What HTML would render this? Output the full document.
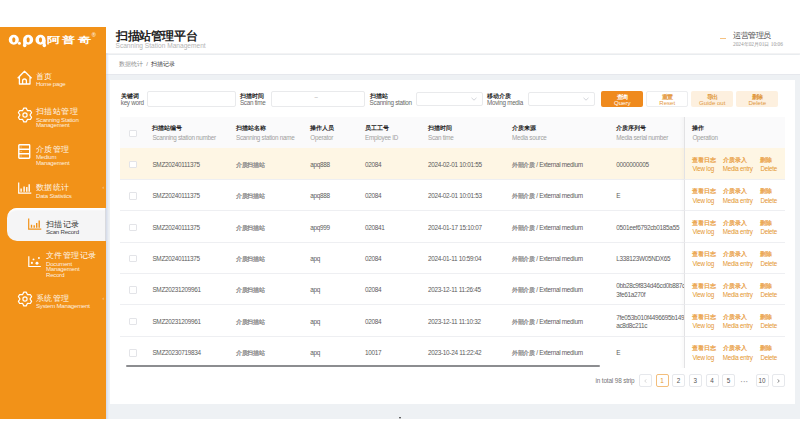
<!DOCTYPE html>
<html><head><meta charset="utf-8">
<style>
*{margin:0;padding:0;box-sizing:border-box}
html,body{width:800px;height:447px;overflow:hidden;background:#fff;font-family:"Liberation Sans",sans-serif;position:relative}
.a{position:absolute;white-space:nowrap}
#side{position:absolute;left:0;top:27px;width:106px;height:392px;background:#F29218;color:#fff}
#main{position:absolute;left:106px;top:27px;width:694px;height:392px;background:#EEF1F4}
#hdr{position:absolute;left:0;top:0;width:694px;height:27px;background:#fff;border-bottom:1px solid #F3F3F4;box-shadow:0 .8px 1px rgba(0,0,0,.02)}
#bc{position:absolute;left:0;top:28px;width:694px;height:20px;background:#fff;border-bottom:1.3px solid #E6E8ED}
#card{position:absolute;left:4px;top:53px;width:685px;height:324px;background:#fff}
.zh{letter-spacing:.4px;font-size:8.3px;line-height:9px;color:rgba(255,255,255,.95)}
.en{font-size:6.1px;letter-spacing:-.22px;line-height:5.3px;margin-top:-.6px;color:rgba(255,255,255,.88)}
.ico{position:absolute}
.pill{position:absolute;left:7px;top:181.2px;width:99px;height:33.3px;background:#F5F5F6;border-radius:10px 0 0 10px;border-right:1px solid #D9DADE;box-shadow:inset 0 4px 2px -2px #fff}
.btn{position:absolute;width:42px;height:16.3px;border-radius:2px;text-align:center}
.btn .z{font-size:6.2px;line-height:6px;display:block;margin-top:3.3px;font-weight:bold;letter-spacing:-.5px;text-indent:-.5px}
.btn .e{font-size:6.1px;line-height:6.6px;display:block;margin-top:.5px}
.lbl .z{font-size:6px;line-height:6.5px;font-weight:bold;color:#222;display:block;margin-top:.7px}
.lbl .e{font-size:6.3px;letter-spacing:-.27px;line-height:6.5px;color:#6A6A6A;display:block;margin-top:.1px}
.inp{position:absolute;border:1px solid #E9EAEC;border-radius:2px;background:#fff}
.th .z{font-size:6px;line-height:7px;font-weight:bold;color:#222;display:block;margin-top:.8px}
.th .e{font-size:6.3px;letter-spacing:-.27px;line-height:7px;color:#A0A0A0;display:block;margin-top:1.5px}
.cell{position:absolute;font-size:6.4px;letter-spacing:-.3px;color:#5C5C5C;white-space:nowrap}
.cb{position:absolute;width:7.5px;height:7.5px;border:1px solid #E3E4E8;border-radius:1px;background:#fff}
.op{position:absolute;color:#E4962F}
.op .z{font-size:5.8px;line-height:8px;display:block;color:#E08A1E;-webkit-text-stroke:.25px #EDA850}
.op .e{font-size:6.3px;letter-spacing:-.27px;line-height:7px;display:block;margin-top:1.5px}
.pg{position:absolute;width:13px;height:13px;border:1px solid #E6E8EC;border-radius:2px;font-size:6.3px;line-height:11px;text-align:center;color:#555;background:#fff}
</style></head><body>
<div id="side">
  <svg class="ico" style="left:0;top:0" width="50" height="24" viewBox="0 27 50 24"><path fill="#fff" fill-rule="evenodd" d="M8.75 39.8a5.05 4.95 0 1 0 10.10 0a5.05 4.95 0 1 0 -10.10 0zM12.20 39.8a1.6 2.6 0 1 0 3.20 0a1.6 2.6 0 1 0 -3.20 0zM23.10 39.8a5.05 4.95 0 1 0 10.10 0a5.05 4.95 0 1 0 -10.10 0zM26.55 39.8a1.6 2.6 0 1 0 3.20 0a1.6 2.6 0 1 0 -3.20 0zM35.45 39.8a5.05 4.95 0 1 0 10.10 0a5.05 4.95 0 1 0 -10.10 0zM38.90 39.8a1.6 2.6 0 1 0 3.20 0a1.6 2.6 0 1 0 -3.20 0z"/><circle cx="19.4" cy="43.3" r="1.5" fill="#fff"/><circle cx="24.7" cy="45.6" r="1.75" fill="#fff"/><path d="M23.2 40H26.2V45.6H23.2z" fill="#fff"/><circle cx="44.3" cy="45.6" r="1.75" fill="#fff"/><path d="M42.8 40H45.6V45.6H42.8z" fill="#fff"/></svg>
  <div class="a" style="left:47.2px;top:7.5px;font-size:9px;line-height:10px;font-weight:bold;letter-spacing:1.55px;transform:scaleX(1.46);transform-origin:0 0">阿普奇</div>
  <div class="a" style="left:91.8px;top:6px;font-size:5.5px;line-height:5px;color:#fff">®</div>

  <svg class="ico" style="left:17px;top:43px" width="16" height="16" viewBox="0 0 16 16" fill="none" stroke="#fff" stroke-width="1.3"><path stroke-linejoin="round" d="M0.7 8.3L7.5 1.3 14.6 8.3M2.4 6.7V14H13V6.7M5.6 14V10.9a1.9 1.9 0 0 1 3.8 0V14"/></svg>
  <div class="a zh" style="left:36px;top:44.5px">首页</div>
  <div class="a en" style="left:36px;top:55px">Home page</div>

  <svg class="ico" style="left:16.5px;top:79.5px" width="16" height="16" viewBox="0 0 16 16" fill="none" stroke="#fff" stroke-width="1.2"><path stroke-linejoin="round" d="M6.78 1.11L9.22 1.11L10.50 3.67L13.36 3.50L14.58 5.61L13.00 8.00L14.58 10.39L13.36 12.50L10.50 12.33L9.22 14.89L6.78 14.89L5.50 12.33L2.64 12.50L1.42 10.39L3.00 8.00L1.42 5.61L2.64 3.50L5.50 3.67z"/><circle cx="8" cy="8" r="2.1"/></svg>
  <div class="a zh" style="left:36px;top:80px">扫描站管理</div>
  <div class="a en" style="left:36px;top:90.5px">Scanning Station<br>Management</div>

  <svg class="ico" style="left:18.3px;top:116.8px" width="13" height="15" viewBox="0 0 13 15" fill="none" stroke="#fff" stroke-width="1.4"><rect x="0.8" y="0.8" width="10.9" height="13.4" rx=".6"/><path d="M0.8 5.3H11.7M0.8 9.7H11.7"/><path d="M2.6 3h1M2.6 7.5h1M2.6 12h1" stroke-width="1" stroke-opacity=".6"/></svg>
  <div class="a zh" style="left:36px;top:117.5px">介质管理</div>
  <div class="a en" style="left:36px;top:128px">Medium<br>Management</div>

  <svg class="ico" style="left:18px;top:155px" width="14" height="12" viewBox="0 0 14 12" fill="none" stroke="#fff" stroke-width="1.2"><path d="M0.7 0.4V11.2H13.3"/><path d="M3.1 9.8V6.6M6.1 9.8V4.5M8.8 9.8V5M11.2 9.8V2.3" stroke-width="1.4"/></svg>
  <div class="a zh" style="left:36px;top:156px">数据统计</div>
  <div class="a en" style="left:36px;top:166.5px">Data Statistics</div>
  <div class="a" style="left:102.5px;top:157px;font-size:5px;color:rgba(255,255,255,.7)">‹</div>

  <div class="pill"></div>
  <svg class="ico" style="left:28px;top:191px" width="14" height="12" viewBox="0 0 14 12" fill="none" stroke="#F29218" stroke-width="1.2"><path d="M0.7 0.4V11.2H13.3"/><path d="M3.5 9.8V6.7M6.2 9.8V7.2M8.7 9.8V4.9M11.2 9.8V2.4" stroke-width="1.4"/></svg>
  <div class="a zh" style="left:46px;top:192.5px;color:#333">扫描记录</div>
  <div class="a en" style="left:46px;top:203px;color:#444">Scan Record</div>

  <svg class="ico" style="left:28px;top:228px" width="14" height="13" viewBox="0 0 14 13" fill="none" stroke="#fff" stroke-width="1.2"><path d="M0.8 1.2V11.5H12.8"/><g fill="#fff" stroke="none"><circle cx="5.5" cy="4.4" r=".95"/><circle cx="10.9" cy="3" r=".95"/><circle cx="3.9" cy="7.9" r="1.05"/><circle cx="9" cy="8.2" r="1.45"/></g></svg>
  <div class="a zh" style="left:46px;top:223.5px">文件管理记录</div>
  <div class="a en" style="left:46px;top:234.5px">Document<br>Management<br>Record</div>

  <svg class="ico" style="left:17px;top:264px" width="16" height="16" viewBox="0 0 16 16" fill="none" stroke="#fff" stroke-width="1.2"><path stroke-linejoin="round" d="M6.78 1.11L9.22 1.11L10.50 3.67L13.36 3.50L14.58 5.61L13.00 8.00L14.58 10.39L13.36 12.50L10.50 12.33L9.22 14.89L6.78 14.89L5.50 12.33L2.64 12.50L1.42 10.39L3.00 8.00L1.42 5.61L2.64 3.50L5.50 3.67z"/><circle cx="8" cy="8" r="2.1"/></svg>
  <div class="a zh" style="left:36px;top:266.5px">系统管理</div>
  <div class="a en" style="left:36px;top:276.5px">System Management</div>
  <div class="a" style="left:102.5px;top:268px;font-size:5px;color:rgba(255,255,255,.7)">‹</div>
</div>
<div id="main">
  <div id="hdr">
    <div class="a" style="left:10px;top:2px;font-size:11.5px;line-height:13px;font-weight:bold;color:#222;top:2.8px;letter-spacing:-.4px">扫描站管理平台</div>
    <div class="a" style="left:9.5px;top:15px;font-size:6.6px;line-height:7px;color:#B5B5B5">Scanning Station Management</div>
    <div class="a" style="left:614px;top:11.2px;width:6px;height:1.2px;background:#F5C282"></div>
    <div class="a" style="left:627px;top:3.8px;letter-spacing:-.5px;font-size:8px;line-height:9px;color:#444">运营管理员</div>
    <div class="a" style="left:627px;top:14px;font-family:'Liberation Serif',serif;font-size:5.35px;line-height:7px;color:#999">2024年02月01日 10:06</div>
  </div>
  <div id="bc">
    <div class="a" style="left:13px;top:6px;font-size:6px;line-height:7px;color:#888">数据统计 &nbsp;/&nbsp; <span style="color:#333">扫描记录</span></div>
  </div>
<div id="card">
<div class="a lbl" style="left:10.75px;top:12.8px"><span class="z">关键词</span><span class="e">key word</span></div>
<div class="inp" style="left:36.5px;top:10.6px;width:89.8px;height:16.4px"></div>
<div class="a lbl" style="left:129.9px;top:12.8px"><span class="z">扫描时间</span><span class="e">Scan time</span></div>
<div class="inp" style="left:160.9px;top:10.6px;width:94.5px;height:16.4px"><div class="a" style="left:42.5px;top:2.6px;font-size:6px;color:#999">–</div></div>
<div class="a lbl" style="left:259.6px;top:12.8px"><span class="z">扫描站</span><span class="e">Scanning station</span></div>
<div class="inp" style="left:306.4px;top:12px;width:66.2px;height:13.5px"><svg class="a" style="right:4.5px;top:3.8px" width="6" height="4" viewBox="0 0 6 4" fill="none" stroke="#C0C4CC" stroke-width=".7"><path d="M.5 .8L3 3.2 5.5 .8"/></svg></div>
<div class="a lbl" style="left:377px;top:12.8px"><span class="z">移动介质</span><span class="e">Moving media</span></div>
<div class="inp" style="left:418.1px;top:12px;width:66.5px;height:13.5px"><svg class="a" style="right:4.5px;top:3.8px" width="6" height="4" viewBox="0 0 6 4" fill="none" stroke="#C0C4CC" stroke-width=".7"><path d="M.5 .8L3 3.2 5.5 .8"/></svg></div>
<div class="btn" style="left:491.25px;top:10.6px;background:#EF8A1D;color:#fff"><span class="z">查询</span><span class="e">Query</span></div>
<div class="btn" style="left:536.25px;top:10.6px;background:#fff;border:1px solid #ECEDEF;color:#E49A45"><span class="z" style="margin-top:2.3px">重置</span><span class="e">Reset</span></div>
<div class="btn" style="left:581.25px;top:10.6px;background:#FDF0DF;color:#E0983E"><span class="z">导出</span><span class="e">Guide out</span></div>
<div class="btn" style="left:626.25px;top:10.6px;background:#FDF0DF;color:#E0983E"><span class="z">删除</span><span class="e">Delete</span></div>
<div class="a" style="left:10px;top:37.2px;width:665px;height:31.2px;background:#FAFAFB"></div>
<div class="cb" style="left:19.3px;top:49.7px"></div>
<div class="th a" style="left:42.4px;top:44.7px"><span class="z">扫描站编号</span><span class="e">Scanning station number</span></div>
<div class="th a" style="left:126px;top:44.7px"><span class="z">扫描站名称</span><span class="e">Scanning station name</span></div>
<div class="th a" style="left:200.3px;top:44.7px"><span class="z">操作人员</span><span class="e">Operator</span></div>
<div class="th a" style="left:255px;top:44.7px"><span class="z">员工工号</span><span class="e">Employee ID</span></div>
<div class="th a" style="left:318px;top:44.7px"><span class="z">扫描时间</span><span class="e">Scan time</span></div>
<div class="th a" style="left:402px;top:44.7px"><span class="z">介质来源</span><span class="e">Media source</span></div>
<div class="th a" style="left:506.2px;top:44.7px"><span class="z">介质序列号</span><span class="e">Media serial number</span></div>
<div class="a" style="left:10px;top:68.4px;width:665px;height:31.4px;background:#FEF6E4;border-bottom:1px solid #EEEFF2"></div>
<div class="cb" style="left:19.3px;top:80.7px"></div>
<div class="cell a" style="left:42.4px;top:80.7px;line-height:8px">SMZ20240111375</div>
<div class="cell a" style="left:126px;top:80.7px;line-height:8px"><span style="color:#555;-webkit-text-stroke:.25px #999">介质扫描站</span></div>
<div class="cell a" style="left:200.3px;top:80.7px;line-height:8px">apq888</div>
<div class="cell a" style="left:255px;top:80.7px;line-height:8px">02084</div>
<div class="cell a" style="left:318px;top:80.7px;line-height:8px">2024-02-01 10:01:55</div>
<div class="cell a" style="left:402px;top:80.7px;line-height:8px"><span style="color:#555;-webkit-text-stroke:.25px #999">外部介质</span> / External medium</div>
<div class="cell a" style="left:506.2px;top:80.7px;line-height:8px">0000000005</div>
<div class="a" style="left:10px;top:99.80000000000001px;width:665px;height:31.4px;background:#fff;border-bottom:1px solid #EEEFF2"></div>
<div class="cb" style="left:19.3px;top:112.10000000000001px"></div>
<div class="cell a" style="left:42.4px;top:112.10000000000001px;line-height:8px">SMZ20240111375</div>
<div class="cell a" style="left:126px;top:112.10000000000001px;line-height:8px"><span style="color:#555;-webkit-text-stroke:.25px #999">介质扫描站</span></div>
<div class="cell a" style="left:200.3px;top:112.10000000000001px;line-height:8px">apq888</div>
<div class="cell a" style="left:255px;top:112.10000000000001px;line-height:8px">02084</div>
<div class="cell a" style="left:318px;top:112.10000000000001px;line-height:8px">2024-02-01 10:01:53</div>
<div class="cell a" style="left:402px;top:112.10000000000001px;line-height:8px"><span style="color:#555;-webkit-text-stroke:.25px #999">外部介质</span> / External medium</div>
<div class="cell a" style="left:506.2px;top:112.10000000000001px;line-height:8px">E</div>
<div class="a" style="left:10px;top:131.2px;width:665px;height:31.4px;background:#fff;border-bottom:1px solid #EEEFF2"></div>
<div class="cb" style="left:19.3px;top:143.5px"></div>
<div class="cell a" style="left:42.4px;top:143.5px;line-height:8px">SMZ20240111375</div>
<div class="cell a" style="left:126px;top:143.5px;line-height:8px"><span style="color:#555;-webkit-text-stroke:.25px #999">介质扫描站</span></div>
<div class="cell a" style="left:200.3px;top:143.5px;line-height:8px">apq999</div>
<div class="cell a" style="left:255px;top:143.5px;line-height:8px">020841</div>
<div class="cell a" style="left:318px;top:143.5px;line-height:8px">2024-01-17 15:10:07</div>
<div class="cell a" style="left:402px;top:143.5px;line-height:8px"><span style="color:#555;-webkit-text-stroke:.25px #999">外部介质</span> / External medium</div>
<div class="cell a" style="left:506.2px;top:143.5px;line-height:8px">0501eef6792cb0185a55</div>
<div class="a" style="left:10px;top:162.6px;width:665px;height:31.4px;background:#fff;border-bottom:1px solid #EEEFF2"></div>
<div class="cb" style="left:19.3px;top:174.9px"></div>
<div class="cell a" style="left:42.4px;top:174.9px;line-height:8px">SMZ20240111375</div>
<div class="cell a" style="left:126px;top:174.9px;line-height:8px"><span style="color:#555;-webkit-text-stroke:.25px #999">介质扫描站</span></div>
<div class="cell a" style="left:200.3px;top:174.9px;line-height:8px">apq</div>
<div class="cell a" style="left:255px;top:174.9px;line-height:8px">02084</div>
<div class="cell a" style="left:318px;top:174.9px;line-height:8px">2024-01-11 10:59:04</div>
<div class="cell a" style="left:402px;top:174.9px;line-height:8px"><span style="color:#555;-webkit-text-stroke:.25px #999">外部介质</span> / External medium</div>
<div class="cell a" style="left:506.2px;top:174.9px;line-height:8px">L338123W05NDX65</div>
<div class="a" style="left:10px;top:194.0px;width:665px;height:31.4px;background:#fff;border-bottom:1px solid #EEEFF2"></div>
<div class="cb" style="left:19.3px;top:206.3px"></div>
<div class="cell a" style="left:42.4px;top:206.3px;line-height:8px">SMZ20231209961</div>
<div class="cell a" style="left:126px;top:206.3px;line-height:8px"><span style="color:#555;-webkit-text-stroke:.25px #999">介质扫描站</span></div>
<div class="cell a" style="left:200.3px;top:206.3px;line-height:8px">apq</div>
<div class="cell a" style="left:255px;top:206.3px;line-height:8px">02084</div>
<div class="cell a" style="left:318px;top:206.3px;line-height:8px">2023-12-11 11:26:45</div>
<div class="cell a" style="left:402px;top:206.3px;line-height:8px"><span style="color:#555;-webkit-text-stroke:.25px #999">外部介质</span> / External medium</div>
<div class="cell a" style="left:506.2px;top:202.3px;line-height:8.6px">0bb28c9f834d46cd0b887c<br>3fe61a270f</div>
<div class="a" style="left:10px;top:225.4px;width:665px;height:31.4px;background:#fff;border-bottom:1px solid #EEEFF2"></div>
<div class="cb" style="left:19.3px;top:237.70000000000002px"></div>
<div class="cell a" style="left:42.4px;top:237.70000000000002px;line-height:8px">SMZ20231209961</div>
<div class="cell a" style="left:126px;top:237.70000000000002px;line-height:8px"><span style="color:#555;-webkit-text-stroke:.25px #999">介质扫描站</span></div>
<div class="cell a" style="left:200.3px;top:237.70000000000002px;line-height:8px">apq</div>
<div class="cell a" style="left:255px;top:237.70000000000002px;line-height:8px">02084</div>
<div class="cell a" style="left:318px;top:237.70000000000002px;line-height:8px">2023-12-11 11:10:32</div>
<div class="cell a" style="left:402px;top:237.70000000000002px;line-height:8px"><span style="color:#555;-webkit-text-stroke:.25px #999">外部介质</span> / External medium</div>
<div class="cell a" style="left:506.2px;top:233.70000000000002px;line-height:8.6px">7fe053b010f4496695b149<br>ac8d8c211c</div>
<div class="a" style="left:10px;top:256.79999999999995px;width:665px;height:31.4px;background:#fff;border-bottom:0"></div>
<div class="cb" style="left:19.3px;top:269.09999999999997px"></div>
<div class="cell a" style="left:42.4px;top:269.09999999999997px;line-height:8px">SMZ20230719834</div>
<div class="cell a" style="left:126px;top:269.09999999999997px;line-height:8px"><span style="color:#555;-webkit-text-stroke:.25px #999">介质扫描站</span></div>
<div class="cell a" style="left:200.3px;top:269.09999999999997px;line-height:8px">apq</div>
<div class="cell a" style="left:255px;top:269.09999999999997px;line-height:8px">10017</div>
<div class="cell a" style="left:318px;top:269.09999999999997px;line-height:8px">2023-10-24 11:22:42</div>
<div class="cell a" style="left:402px;top:269.09999999999997px;line-height:8px"><span style="color:#555;-webkit-text-stroke:.25px #999">外部介质</span> / External medium</div>
<div class="cell a" style="left:506.2px;top:269.09999999999997px;line-height:8px">E</div>
<div class="a" style="left:574.3px;top:37.2px;width:100.70000000000005px;height:31.2px;background:#FAFAFB;border-left:1px solid #E2E2E4"></div>
<div class="th a" style="left:582.4px;top:44.7px"><span class="z">操作</span><span class="e">Operation</span></div>
<div class="a" style="left:574.3px;top:68.4px;width:100.70000000000005px;height:31.4px;background:#FEF6E4;border-left:1px solid #E2E2E4;border-bottom:1px solid #EEEFF2"></div>
<div class="op a" style="left:582.4px;top:75.9px"><span class="z">查看日志</span><span class="e">View log</span></div>
<div class="op a" style="left:612.8px;top:75.9px"><span class="z">介质录入</span><span class="e">Media entry</span></div>
<div class="op a" style="left:650.4px;top:75.9px"><span class="z">删除</span><span class="e">Delete</span></div>
<div class="a" style="left:574.3px;top:99.80000000000001px;width:100.70000000000005px;height:31.4px;background:#fff;border-left:1px solid #E2E2E4;border-bottom:1px solid #EEEFF2"></div>
<div class="op a" style="left:582.4px;top:107.30000000000001px"><span class="z">查看日志</span><span class="e">View log</span></div>
<div class="op a" style="left:612.8px;top:107.30000000000001px"><span class="z">介质录入</span><span class="e">Media entry</span></div>
<div class="op a" style="left:650.4px;top:107.30000000000001px"><span class="z">删除</span><span class="e">Delete</span></div>
<div class="a" style="left:574.3px;top:131.2px;width:100.70000000000005px;height:31.4px;background:#fff;border-left:1px solid #E2E2E4;border-bottom:1px solid #EEEFF2"></div>
<div class="op a" style="left:582.4px;top:138.7px"><span class="z">查看日志</span><span class="e">View log</span></div>
<div class="op a" style="left:612.8px;top:138.7px"><span class="z">介质录入</span><span class="e">Media entry</span></div>
<div class="op a" style="left:650.4px;top:138.7px"><span class="z">删除</span><span class="e">Delete</span></div>
<div class="a" style="left:574.3px;top:162.6px;width:100.70000000000005px;height:31.4px;background:#fff;border-left:1px solid #E2E2E4;border-bottom:1px solid #EEEFF2"></div>
<div class="op a" style="left:582.4px;top:170.1px"><span class="z">查看日志</span><span class="e">View log</span></div>
<div class="op a" style="left:612.8px;top:170.1px"><span class="z">介质录入</span><span class="e">Media entry</span></div>
<div class="op a" style="left:650.4px;top:170.1px"><span class="z">删除</span><span class="e">Delete</span></div>
<div class="a" style="left:574.3px;top:194.0px;width:100.70000000000005px;height:31.4px;background:#fff;border-left:1px solid #E2E2E4;border-bottom:1px solid #EEEFF2"></div>
<div class="op a" style="left:582.4px;top:201.5px"><span class="z">查看日志</span><span class="e">View log</span></div>
<div class="op a" style="left:612.8px;top:201.5px"><span class="z">介质录入</span><span class="e">Media entry</span></div>
<div class="op a" style="left:650.4px;top:201.5px"><span class="z">删除</span><span class="e">Delete</span></div>
<div class="a" style="left:574.3px;top:225.4px;width:100.70000000000005px;height:31.4px;background:#fff;border-left:1px solid #E2E2E4;border-bottom:1px solid #EEEFF2"></div>
<div class="op a" style="left:582.4px;top:232.9px"><span class="z">查看日志</span><span class="e">View log</span></div>
<div class="op a" style="left:612.8px;top:232.9px"><span class="z">介质录入</span><span class="e">Media entry</span></div>
<div class="op a" style="left:650.4px;top:232.9px"><span class="z">删除</span><span class="e">Delete</span></div>
<div class="a" style="left:574.3px;top:256.79999999999995px;width:100.70000000000005px;height:31.4px;background:#fff;border-left:1px solid #E2E2E4;border-bottom:0"></div>
<div class="op a" style="left:582.4px;top:264.29999999999995px"><span class="z">查看日志</span><span class="e">View log</span></div>
<div class="op a" style="left:612.8px;top:264.29999999999995px"><span class="z">介质录入</span><span class="e">Media entry</span></div>
<div class="op a" style="left:650.4px;top:264.29999999999995px"><span class="z">删除</span><span class="e">Delete</span></div>
<div class="a" style="left:570.3px;top:37.2px;width:4px;height:250.99999999999997px;background:linear-gradient(to right,rgba(0,0,0,0),rgba(0,0,0,.025))"></div>
<div class="a" style="left:15.6px;top:285px;width:474px;height:1.6px;background:#8C8D90;border-radius:1px"></div>
<div class="a" style="left:485.5px;top:297px;font-size:6.4px;letter-spacing:-.15px;line-height:7px;color:#777">in total 98 strip</div>
<div class="pg" style="left:528.75px;top:293.8px;"><svg style="position:absolute;left:4.3px;top:3.8px" width="3" height="4" viewBox="0 0 3 4" fill="none" stroke="#C8C8C8" stroke-width=".7"><path d="M2.5 .3L.7 2 2.5 3.7"/></svg></div>
<div class="pg" style="left:545.5px;top:293.8px;border-color:#F3BE7C;color:#E4962F">1</div>
<div class="pg" style="left:562px;top:293.8px;">2</div>
<div class="pg" style="left:578.75px;top:293.8px;">3</div>
<div class="pg" style="left:595.5px;top:293.8px;">4</div>
<div class="pg" style="left:612px;top:293.8px;">5</div>
<div class="pg" style="left:645.5px;top:293.8px;">10</div>
<div class="pg" style="left:662px;top:293.8px;"><svg style="position:absolute;left:4.3px;top:3.8px" width="3" height="4" viewBox="0 0 3 4" fill="none" stroke="#555" stroke-width=".7"><path d="M.5 .3L2.3 2 .5 3.7"/></svg></div>
<div class="a" style="left:630.5px;top:297.5px;font-size:7px;line-height:7px;font-weight:bold;color:#A0A0A0;letter-spacing:.3px">···</div>
</div>
<div class="a" style="left:0;top:26px;width:3px;height:366px;background:linear-gradient(to right,rgba(190,200,225,.55),rgba(190,200,225,0))"></div>
<div class="a" style="left:293px;top:390px;width:0;height:0;border-left:1.5px solid transparent;border-right:1.5px solid transparent;border-top:2px solid #333"></div>
</div>
</body></html>
